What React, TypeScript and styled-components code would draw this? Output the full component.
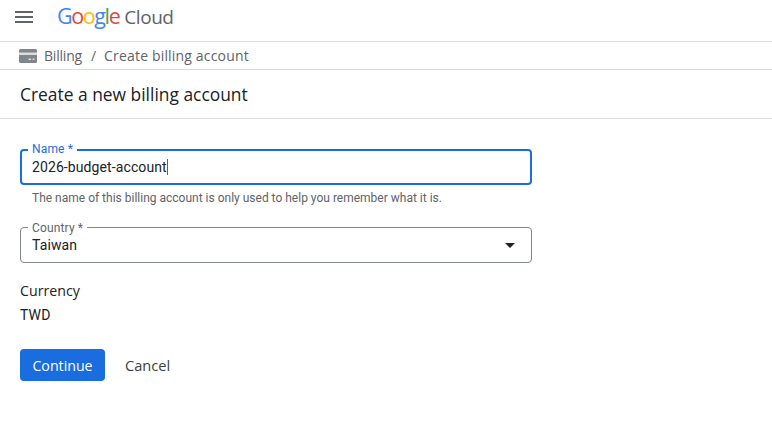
import React from "react";
import styled, { createGlobalStyle } from "styled-components";

const Global = createGlobalStyle`
  html, body { margin: 0; padding: 0; background: #fff; }
  body { font-family: Roboto, "Liberation Sans", sans-serif; color: #202124; overflow: hidden; }
`;

const Page = styled.div`
  width: 772px;
  height: 440px;
  display: flex;
  flex-direction: column;
`;

const TopBar = styled.header`
  height: 41px;
  flex: none;
  border-bottom: 1px solid #dadce0;
  display: flex;
  align-items: flex-start;
  padding-left: 15px;
`;

const MenuButton = styled.svg`
  width: 18px;
  height: 12px;
  margin-top: 11px;
  display: block;
`;

const Logo = styled.div`
  margin-left: 24px;
  margin-top: 2px;
  display: flex;
  align-items: baseline;
  font-family: "Open Sans", sans-serif;
  font-size: 21.5px;
  line-height: 28px;
  letter-spacing: -1.4px;
  white-space: nowrap;
`;

const LogoLetter = styled.span<{ $c: string }>`
  color: ${(p) => p.$c};
`;

const LogoCloud = styled.span`
  color: #5f6368;
  font-size: 19px;
  margin-left: 5px;
  letter-spacing: -0.45px;
`;

const Breadcrumbs = styled.nav`
  height: 27px;
  flex: none;
  border-bottom: 1px solid #dadce0;
  display: flex;
  align-items: center;
  padding-left: 19px;
  font-family: "Open Sans", sans-serif;
  font-size: 14px;
  color: #5f6368;
`;

const CardIcon = styled.svg`
  width: 18px;
  height: 14px;
  margin-right: 7px;
  display: block;
`;

const Crumb = styled.span<{ $spacing: number }>`
  letter-spacing: ${(p) => p.$spacing}px;
`;

const Separator = styled.span`
  margin: 0 8px 0 9px;
`;

const TitleBar = styled.div`
  height: 48px;
  flex: none;
  border-bottom: 1px solid #dadce0;
  display: flex;
  align-items: center;
  padding-left: 20px;
`;

const Title = styled.h1`
  margin: 0 0 1px;
  font-family: "Open Sans", sans-serif;
  font-size: 17.4px;
  font-weight: 400;
  color: #202124;
`;

const Form = styled.form`
  padding: 30px 0 0 20px;
  width: 512px;
  display: flex;
  flex-direction: column;
`;

const Field = styled.div<{ $focused?: boolean }>`
  position: relative;
  box-sizing: border-box;
  height: 36px;
  border: ${(p) => (p.$focused ? "2px solid #1a6dde" : "1px solid #80868b")};
  border-radius: 4px;
  display: flex;
  align-items: center;
  justify-content: space-between;
  padding: ${(p) => (p.$focused ? "0 10px" : "0 16px 0 11px")};
  font-size: 14px;
  letter-spacing: 0.1px;
  color: #202124;
`;

const FloatLabel = styled.label<{ $focused?: boolean }>`
  position: absolute;
  left: ${(p) => (p.$focused ? "6px" : "7px")};
  top: ${(p) => (p.$focused ? "-9px" : "-7px")};
  background: #fff;
  padding: 0 4px;
  font-size: 12px;
  line-height: 14px;
  letter-spacing: 0.15px;
  color: ${(p) => (p.$focused ? "#1a6dde" : "#5f6368")};
`;

const Value = styled.span`
  display: flex;
  align-items: center;
`;

const Caret = styled.span`
  display: inline-block;
  width: 1px;
  height: 16px;
  background: #1a6dde;
`;

const Hint = styled.div`
  margin: 5px 0 21px 12px;
  font-size: 12px;
  line-height: 16px;
  color: #5f6368;
`;

const Arrow = styled.svg`
  width: 10px;
  height: 5px;
  display: block;
`;

const SummaryLabel = styled.div`
  margin-top: 19px;
  font-family: "Open Sans", sans-serif;
  font-size: 14.2px;
  line-height: 18px;
  font-weight: 500;
  color: #202124;
`;

const SummaryValue = styled.div`
  margin-top: 6px;
  font-size: 14px;
  line-height: 18px;
  letter-spacing: 0.15px;
  color: #202124;
`;

const Actions = styled.div`
  margin-top: 25px;
  display: flex;
  align-items: center;
  gap: 20px;
`;

const PrimaryButton = styled.button`
  width: 85px;
  height: 32px;
  border: 0;
  border-radius: 4px;
  background: #1a6dde;
  color: #fff;
  font-family: "Open Sans", sans-serif;
  font-size: 14.2px;
  font-weight: 500;
  padding: 0;
`;

const TextButton = styled.button`
  border: 0;
  background: none;
  padding: 0;
  color: #3c4043;
  font-family: "Open Sans", sans-serif;
  font-size: 14.6px;
  font-weight: 500;
`;

const letters: [string, string][] = [
  ["G", "#4285f4"],
  ["o", "#ea4335"],
  ["o", "#fbbc05"],
  ["g", "#4285f4"],
  ["l", "#34a853"],
  ["e", "#ea4335"],
];

export default function App() {
  return (
    <Page>
      <Global />
      <TopBar>
        <MenuButton viewBox="0 0 18 12">
          <path d="M0 0h18v2H0zM0 5h18v2H0zM0 10h18v2H0z" fill="#5f6368" />
        </MenuButton>
        <Logo>
          {letters.map(([l, c], i) => (
            <LogoLetter key={i} $c={c}>
              {l}
            </LogoLetter>
          ))}
          <LogoCloud>Cloud</LogoCloud>
        </Logo>
      </TopBar>
      <Breadcrumbs>
        <CardIcon viewBox="0 0 18 14">
          <path
            d="M1.500 0h15A1.500 1.500 0 0 1 18 1.500v11a1.500 1.500 0 0 1-1.500 1.500h-15A1.500 1.500 0 0 1 0 12.500v-11A1.500 1.500 0 0 1 1.500 0z"
            fill="#80868b"
          />
          <path d="M0 3.500h18v2.500H0z" fill="#dadce0" />
          <path d="M9.500 9.500h2.500V11H9.500zM13.500 9.500h2V11h-2z" fill="#dadce0" />
        </CardIcon>
        <Crumb $spacing={-0.2}>Billing</Crumb>
        <Separator>/</Separator>
        <Crumb $spacing={0.17}>Create billing account</Crumb>
      </Breadcrumbs>
      <TitleBar>
        <Title>Create a new billing account</Title>
      </TitleBar>
      <Form>
        <Field $focused>
          <FloatLabel $focused>Name *</FloatLabel>
          <Value>
            2026-budget-account
            <Caret />
          </Value>
        </Field>
        <Hint>The name of this billing account is only used to help you remember what it is.</Hint>
        <Field>
          <FloatLabel>Country *</FloatLabel>
          <Value>Taiwan</Value>
          <Arrow viewBox="0 0 10 5">
            <path d="M0 0h10L5 5z" fill="#202124" />
          </Arrow>
        </Field>
        <SummaryLabel>Currency</SummaryLabel>
        <SummaryValue>TWD</SummaryValue>
        <Actions>
          <PrimaryButton type="button">Continue</PrimaryButton>
          <TextButton type="button">Cancel</TextButton>
        </Actions>
      </Form>
    </Page>
  );
}
